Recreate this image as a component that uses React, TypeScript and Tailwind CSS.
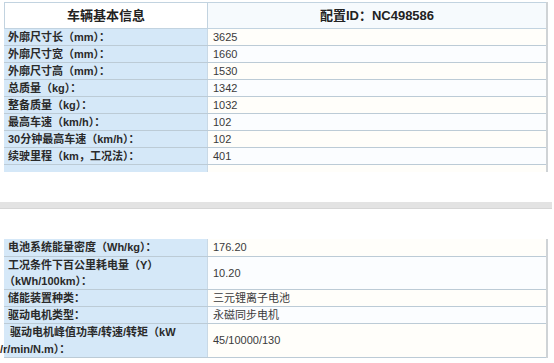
import React from "react";

const font = { fontFamily: '"Liberation Sans", Arial, "Noto Sans CJK SC", sans-serif' };

type Row = { label: React.ReactNode; value: string; h: string; alt?: boolean };

const topRows: Row[] = [
  { label: "外廓尺寸长（mm）：", value: "3625", h: "h-[17px]" },
  { label: "外廓尺寸宽（mm）：", value: "1660", h: "h-[17px]", alt: true },
  { label: "外廓尺寸高（mm）：", value: "1530", h: "h-[17px]" },
  { label: "总质量（kg）：", value: "1342", h: "h-[17px]", alt: true },
  { label: "整备质量（kg）：", value: "1032", h: "h-[17px]" },
  { label: "最高车速（km/h）：", value: "102", h: "h-[17px]", alt: true },
  { label: "30分钟最高车速（km/h）：", value: "102", h: "h-[17px]" },
  { label: "续驶里程（km，工况法）：", value: "401", h: "h-[17px]", alt: true },
];

const bottomRows: Row[] = [
  { label: "电池系统能量密度（Wh/kg）：", value: "176.20", h: "h-[18px]" },
  {
    label: (
      <div className="leading-[16px]">
        <div>工况条件下百公里耗电量（Y）</div>
        <div className="ml-[-4px]">（kWh/100km）：</div>
      </div>
    ),
    value: "10.20",
    h: "h-[33px]",
    alt: true,
  },
  { label: "储能装置种类：", value: "三元锂离子电池", h: "h-[17px]" },
  { label: "驱动电机类型：", value: "永磁同步电机", h: "h-[17px]", alt: true },
  {
    label: (
      <div className="leading-[17px]">
        <div className="ml-[2px]">驱动电机峰值功率/转速/转矩（kW</div>
        <div className="ml-[-8px]">/r/min/N.m）：</div>
      </div>
    ),
    value: "45/10000/130",
    h: "h-[34px]",
  },
];

function DataRow({ r }: { r: Row }) {
  return (
    <div className={`flex ${r.h} border-b border-[#bccbd6]`}>
      <div className="w-[204px] shrink-0 bg-[#d5e8f8] flex items-center pl-[4px] text-[11px] font-bold text-[#2a2a2a] border-r border-[#c9d9e6] overflow-visible">
        {r.label}
      </div>
      <div
        className={`flex-1 flex items-center pl-[5px] text-[11px] text-[#3a3a3a] ${
          r.alt ? "bg-[#fbfdff]" : "bg-[#fffefa]"
        }`}
      >
        {r.value}
      </div>
    </div>
  );
}

export default function App() {
  return (
    <div className="w-[554px] h-[363px] bg-white overflow-hidden relative" style={font}>
      {/* Top table */}
      <div className="ml-[4px] mt-[2px] w-[544px] border-r-2 border-r-[#cfd3d6]">
        <div className="flex h-[27px] border border-[#c2d3e0] border-r-0">
          <div className="w-[203px] shrink-0 flex items-center justify-center text-[13px] font-bold text-[#222] border-r border-[#c2d3e0] bg-white">
            车辆基本信息
          </div>
          <div className="flex-1 flex items-center justify-center text-[13px] font-bold text-[#222] bg-[#f6fafd]">
            配置ID：NC498586
          </div>
        </div>
        {topRows.map((r, i) => (
          <DataRow key={i} r={r} />
        ))}
        <div className="flex h-[7px]">
          <div className="w-[204px] shrink-0 bg-[#d5e8f8] border-r border-[#c9d9e6]" />
          <div className="flex-1 bg-[#fffefa]" />
        </div>
      </div>

      {/* Gray divider band */}
      <div className="mt-[30px] h-[7px] w-[552px] bg-[#e3e3e3] border-b border-[#d6d6d6]" />

      {/* Bottom table */}
      <div className="ml-[4px] mt-[30px] w-[544px] border-r-2 border-r-[#cfd3d6]">
        {bottomRows.map((r, i) => (
          <DataRow key={i} r={r} />
        ))}
      </div>
    </div>
  );
}
